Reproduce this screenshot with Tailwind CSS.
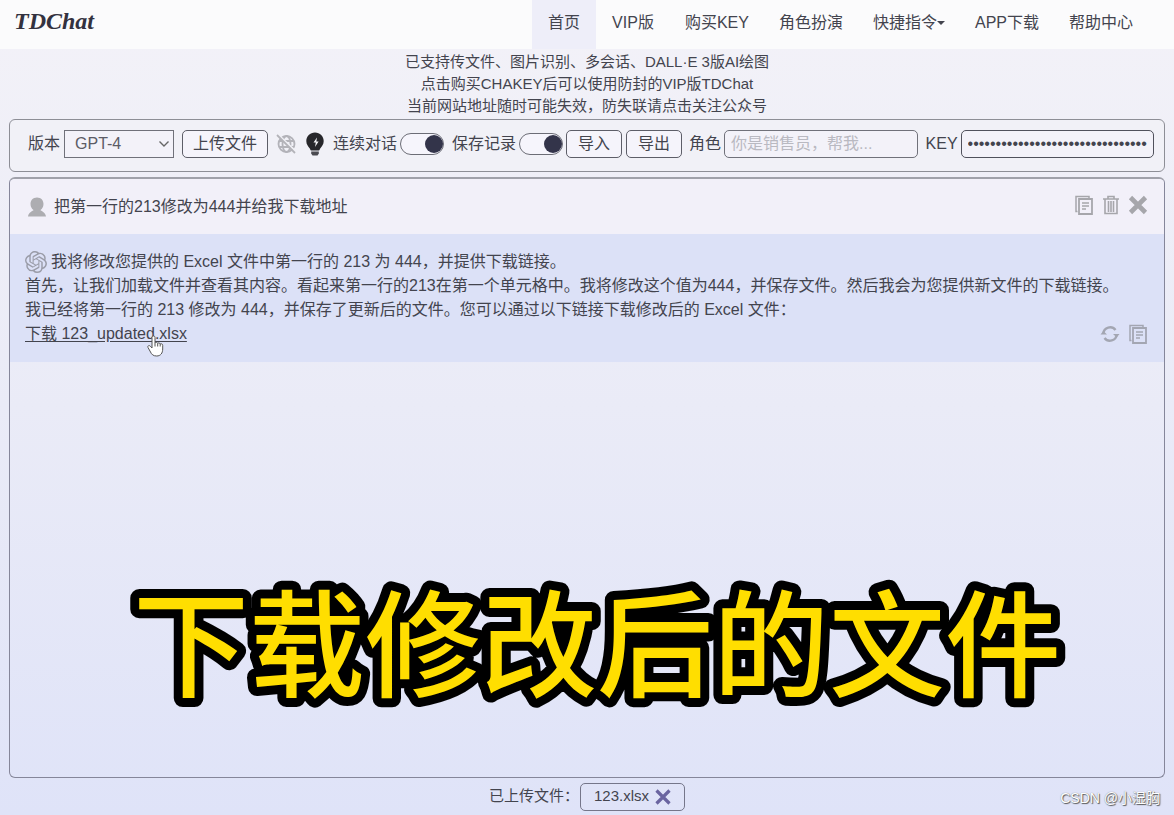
<!DOCTYPE html>
<html lang="zh-CN">
<head>
<meta charset="utf-8">
<meta name="viewport" content="width=device-width, initial-scale=1">
<title>TDChat</title>
<script src="https://cdn.jsdelivr.net/npm/@tailwindcss/browser@4"></script>
</head>
<body class="relative flex min-h-screen flex-col bg-linear-to-b from-[#f3f2f8] via-[#eaebf7] to-[#dfe3f8] font-['Liberation_Sans','Noto_Sans_CJK_SC',sans-serif] text-base text-[#43444e]">
  <svg class="hidden">
    <symbol id="copy" viewBox="0 0 20 20"><path d="M3.500 16.500H2V1.500h13V3" fill="none" stroke="currentColor" stroke-width="1.500"/><path d="M5 4h13v15H5z" fill="none" stroke="currentColor" stroke-width="1.800"/><path d="M8 8h7M8 11h7M8 14h4" stroke="currentColor" stroke-width="1.400"/></symbol>
  </svg>

  <header class="flex h-[49px] items-center justify-between bg-[#fbfbfc] pr-[26px] pl-[14px]">
    <a href="#" class="pb-2 font-['Liberation_Serif',serif] text-2xl font-bold italic text-[#33323f]">TDChat</a>
    <nav class="flex h-full leading-[45px]">
      <a href="#" class="bg-[#eeeef9] px-4">首页</a>
      <a href="#" class="px-4">VIP版</a>
      <a href="#" class="px-[15px]">购买KEY</a>
      <a href="#" class="px-[15px]">角色扮演</a>
      <a href="#" class="flex items-center px-[15px] pb-1">快捷指令<span class="border-x-4 border-t-4 border-x-transparent border-t-[#43444e]"></span></a>
      <a href="#" class="px-[15px]">APP下载</a>
      <a href="#" class="px-[15px]">帮助中心</a>
    </nav>
  </header>

  <main class="flex flex-1 flex-col px-[9px]">
    <div class="pt-[2px] pb-[2px] text-center text-[15px] leading-[22px]">
      <p>已支持传文件、图片识别、多会话、DALL·E 3版AI绘图</p>
      <p>点击购买CHAKEY后可以使用防封的VIP版TDChat</p>
      <p>当前网站地址随时可能失效，防失联请点击关注公众号</p>
    </div>

    <form class="flex h-[53px] items-center rounded-md border border-[#8d8e96] bg-[#f1f1f7] pr-[10px] pb-[3px] pl-[18px] whitespace-nowrap">
      <label for="ver">版本</label>
      <div class="relative ml-1 flex">
        <select id="ver" class="h-7 w-[110px] appearance-none border border-[#70717a] bg-[#f3f2f9] pl-[10px] text-[#5c5c66]"><option>GPT-4</option></select>
        <svg class="pointer-events-none absolute top-[10px] right-1 h-2 w-3" viewBox="0 0 12 8" fill="none" stroke="#666" stroke-width="1.400"><path d="M1.500 1.500 6 6l4.500-4.500"/></svg>
      </div>
      <button type="button" class="ml-2 h-7 rounded-[5px] border border-[#5d5e68] bg-[#f5f4fb] px-[10px]">上传文件</button>
      <button type="button" aria-label="联网" class="ml-2 text-[#b3b3b9]"><svg class="h-5 w-5" viewBox="0 0 20 20" fill="none" stroke="currentColor" stroke-width="1.800"><circle cx="10.500" cy="10" r="8"/><ellipse cx="10.500" cy="10" rx="4" ry="8"/><path d="M3 7h15M3 13h15"/><path d="M1 -.500 20 17.500" stroke="#f1f1f7" stroke-width="1.800"/><path d="M1 1 19 19"/></svg></button>
      <button type="button" aria-label="灵感" class="ml-[10px]"><svg class="h-6 w-[18px]" viewBox="0 0 18 24"><path d="M9 .5C4 .5.3 4.200.3 9c0 3.600 2 5.300 3.500 7.500.5.800.7 2 1.200 2h8c.5 0 .7-1.200 1.200-2 1.500-2.200 3.500-3.900 3.500-7.500C17.700 4.200 14 .5 9 .5z" fill="#27272b"/><path d="M5.200 19.500h7.600v2L11.500 23.500h-5L5.200 21.500z" fill="#4a4a50"/><path d="M11 5.500 7.500 10.500h2.300L9 15l3.600-5.500h-2.300z" fill="#f5f5f8"/></svg></button>
      <label for="ctx" class="ml-[9px]">连续对话</label>
      <input id="ctx" type="checkbox" role="switch" checked class="ml-[3px] h-[22px] w-11 shrink-0 appearance-none rounded-full border border-[#6c6d76] bg-[#f6f5fc] before:mt-px before:ml-[24px] before:block before:h-[18px] before:w-[18px] before:rounded-full before:bg-[#33344a]">
      <label for="save" class="ml-2">保存记录</label>
      <input id="save" type="checkbox" role="switch" checked class="ml-[3px] h-[22px] w-11 shrink-0 appearance-none rounded-full border border-[#6c6d76] bg-[#f6f5fc] before:mt-px before:ml-[24px] before:block before:h-[18px] before:w-[18px] before:rounded-full before:bg-[#33344a]">
      <button type="button" class="ml-[3px] h-7 rounded-[5px] border border-[#5d5e68] bg-[#f5f4fb] px-[11px]">导入</button>
      <button type="button" class="ml-1 h-7 rounded-[5px] border border-[#5d5e68] bg-[#f5f4fb] px-[11px]">导出</button>
      <label for="role" class="ml-[7px]">角色</label>
      <input id="role" type="text" placeholder="你是销售员，帮我..." class="ml-[3px] h-7 w-0 min-w-0 flex-1 rounded-[5px] border border-[#70717a] bg-[#f3f2f9] px-[6px] placeholder:text-[#b9b9c1]">
      <label for="key" class="ml-2">KEY</label>
      <input id="key" type="password" value="sk-0123456789abcdefghijklmnopqrstuvwxyz01234567" class="ml-[3px] h-7 w-0 min-w-0 flex-1 rounded-[5px] border border-[#50515c] bg-[#f3f2f9] px-[6px]">
    </form>

    <section class="mt-[5px] flex flex-1 flex-col overflow-hidden rounded-md border border-t-2 border-[#85869a] border-t-[#a0a1aa]">
      <article class="flex h-[55px] items-center bg-[#f2f0f9] pr-4 pl-[18px]">
        <svg class="h-5 w-[18px] text-[#adadb1]" viewBox="0 0 18 20" fill="currentColor"><path d="M9 .5c4 0 6.500 2.800 6.500 6.500 0 2.800-1.300 4.800-3 6 .3 1.200 5 1.800 5.500 6.500H0c.5-4.700 5.200-5.300 5.500-6.500-1.700-1.200-3-3.200-3-6C2.500 3.300 5 .5 9 .5z"/></svg>
        <p class="ml-2">把第一行的213修改为444并给我下载地址</p>
        <div class="ml-auto flex items-center gap-2 pb-1 text-[#a6a6ab]">
          <button type="button" aria-label="复制"><svg class="h-5 w-5"><use href="#copy"/></svg></button>
          <button type="button" aria-label="删除"><svg class="h-5 w-[18px]" viewBox="0 0 18 20" fill="none" stroke="currentColor" stroke-width="1.600"><path d="M1 4h16M6 4V1.500h6V4M3 4v14.500h12V4M6.500 6v11M9 6v11M11.500 6v11"/></svg></button>
          <button type="button" aria-label="关闭"><svg class="h-5 w-5" viewBox="0 0 20 20" stroke="currentColor" stroke-width="4.600"><path d="M2.500 2.500l15 15M17.500 2.500l-15 15"/></svg></button>
        </div>
      </article>

      <article class="relative bg-[#dce1f7] px-[15px] py-4 leading-6">
        <p class="flex items-center gap-1">
          <svg class="h-[22px] w-[22px] text-[#9a9ca8]" viewBox="0 0 24 24" fill="currentColor"><path d="M22.282 9.821a5.985 5.985 0 0 0-.516-4.910 6.046 6.046 0 0 0-6.510-2.900A6.065 6.065 0 0 0 4.981 4.182a5.985 5.985 0 0 0-3.998 2.900 6.046 6.046 0 0 0 .743 7.097 5.980 5.980 0 0 0 .511 4.911 6.051 6.051 0 0 0 6.515 2.900A5.985 5.985 0 0 0 13.260 24a6.056 6.056 0 0 0 5.772-4.206 5.990 5.990 0 0 0 3.998-2.900 6.056 6.056 0 0 0-.748-7.073zM13.260 22.430a4.476 4.476 0 0 1-2.876-1.041l.141-.080 4.779-2.758a.795.795 0 0 0 .392-.681v-6.737l2.020 1.169a.071.071 0 0 1 .038.052v5.583a4.504 4.504 0 0 1-4.494 4.493zM3.600 18.304a4.471 4.471 0 0 1-.535-3.014l.142.085 4.783 2.759a.771.771 0 0 0 .781 0l5.843-3.369v2.332a.080.080 0 0 1-.033.062L9.740 19.950a4.499 4.499 0 0 1-6.140-1.646zM2.341 7.896a4.485 4.485 0 0 1 2.366-1.973V11.600a.766.766 0 0 0 .388.677l5.815 3.354-2.021 1.169a.076.076 0 0 1-.071 0l-4.830-2.787A4.504 4.504 0 0 1 2.341 7.896zm16.597 3.855l-5.833-3.387L15.119 7.200a.076.076 0 0 1 .071 0l4.830 2.791a4.494 4.494 0 0 1-.676 8.105v-5.678a.790.790 0 0 0-.407-.667zm2.011-3.023l-.142-.085-4.774-2.782a.776.776 0 0 0-.785 0L9.409 9.230V6.897a.066.066 0 0 1 .028-.061l4.830-2.787a4.499 4.499 0 0 1 6.680 4.660zM8.307 12.863l-2.020-1.164a.080.080 0 0 1-.038-.057V6.074a4.499 4.499 0 0 1 7.376-3.454l-.142.081-4.779 2.758a.795.795 0 0 0-.393.681zm1.097-2.365l2.602-1.500 2.607 1.500v2.999l-2.597 1.500-2.607-1.500z"/></svg>
          我将修改您提供的 Excel 文件中第一行的 213 为 444，并提供下载链接。
        </p>
        <p>首先，让我们加载文件并查看其内容。看起来第一行的213在第一个单元格中。我将修改这个值为444，并保存文件。然后我会为您提供新文件的下载链接。</p>
        <p>我已经将第一行的 213 修改为 444，并保存了更新后的文件。您可以通过以下链接下载修改后的 Excel 文件：</p>
        <p><a href="#" class="underline underline-offset-2">下载 123_updated.xlsx</a></p>
        <div class="absolute right-4 bottom-[18px] flex gap-2 text-[#a3a6b2]">
          <button type="button" aria-label="重新生成"><svg class="h-5 w-5" viewBox="0 0 20 20"><path d="M3.300 9.500A6.800 6.800 0 0 1 15.500 6M16.700 10.500A6.800 6.800 0 0 1 4.500 14" fill="none" stroke="currentColor" stroke-width="2.400"/><path d="M13 10h6.500l-2.800 3.500zM.5 10.500h6.500l-3.700-3.500z" fill="currentColor"/></svg></button>
          <button type="button" aria-label="复制"><svg class="h-5 w-5"><use href="#copy"/></svg></button>
        </div>
        <!-- hand pointer resting on the download link -->
        <svg class="absolute top-[101px] left-[137px] h-[22px] w-[17px]" viewBox="0 0 17 22"><path d="M5 2.500C5 .5 8 .5 8 2.500V8c.4-1 2.500-.8 2.700.4.500-.8 2.300-.6 2.500.7.700-.7 2.500-.3 2.500 1.200V14c0 4-2 7-6 7-3.500 0-5-1.500-6.200-4L1 12.500c-.8-1.700 1.200-2.600 2.300-1.300L5 13z" fill="#fff" stroke="#555" stroke-width="1"/><path d="M8 8v3.500M10.700 8.500v3M13.200 9v2.500" stroke="#555"/></svg>
      </article>
    </section>
  </main>

  <footer class="flex h-[37px] items-center justify-center text-[15px]">
    <span>已上传文件：</span>
    <span class="ml-px flex h-7 items-center gap-[6px] rounded-[5px] border border-[#75768a] px-[13px]">123.xlsx
      <button type="button" aria-label="移除"><svg class="h-4 w-4" viewBox="0 0 16 16" stroke="#6a64a0" stroke-width="3.200"><path d="M1.500 1.500l13 13M14.500 1.500l-13 13"/></svg></button>
    </span>
  </footer>

  <p class="pointer-events-none absolute right-[14px] bottom-[7px] text-sm leading-5 text-white [text-shadow:1px_1px_1px_#555,0_0_1px_#777]">CSDN @小湿胸</p>

  <!-- video caption -->
  <svg class="pointer-events-none absolute inset-x-0 top-[570px] h-[150px] w-full overflow-visible pl-5"><text x="50%" y="118" text-anchor="middle" stroke-width="18" stroke-linejoin="round" class="fill-[#ffde00] stroke-black font-['Noto_Sans_CJK_SC',sans-serif] text-[116px] font-medium [paint-order:stroke]">下载修改后的文件</text></svg>
</body>
</html>
